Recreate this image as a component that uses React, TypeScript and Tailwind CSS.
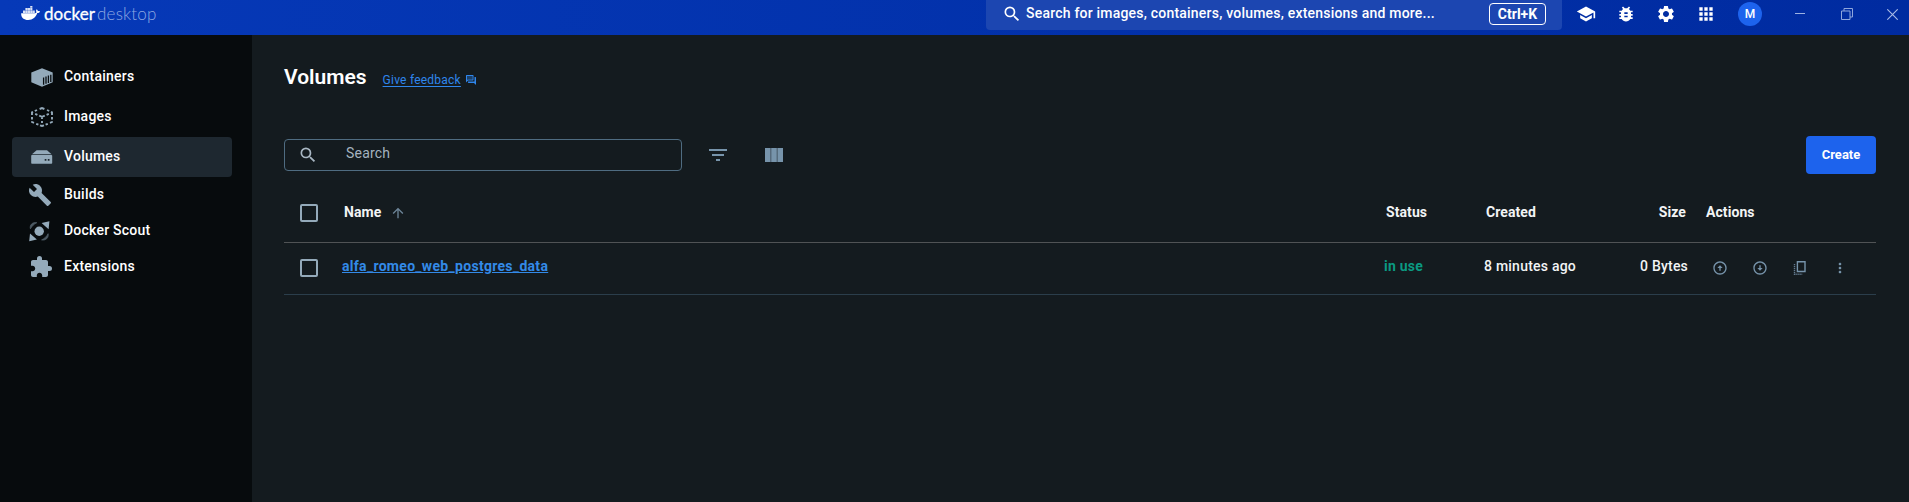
import type { ReactNode } from "react";
import {
  MdSchool,
  MdBugReport,
  MdSettings,
  MdApps,
  MdSearch,
  MdBuild,
  MdExtension,
  MdFilterList,
  MdArrowUpward,
  MdMoreVert,
  MdOutlineArrowCircleUp,
  MdOutlineArrowCircleDown,
} from "react-icons/md";

function Whale() {
  return (
    <svg className="h-[15px] w-[19px]" viewBox="0 0 19 15" fill="#fff">
      <path d="M0.2 7.2H14.2C14.9 7.1 15.3 6.8 15.5 6.3C14.9 5.2 15 4.2 15.6 3.3C16.4 3.8 16.8 4.4 16.9 5.2C17.7 5 18.4 5.1 19 5.5C18.6 6.6 17.6 7.1 16.3 7.1C14.9 11.3 11.9 14 7.2 14C2.6 14 -0.2 11.6 0.2 7.2Z" />
      <path d="M2 4.5h2.2v2.4H2zM4.4 4.5h2.2v2.4h-2.2zM6.8 4.5h2.2v2.4h-2.2zM9.2 4.5h2.2v2.4h-2.2zM11.6 4.5h2.2v2.4h-2.2zM4.4 2h2.2v2.3h-2.2zM6.8 2h2.2v2.3h-2.2zM9.2 2h2.2v2.3h-2.2zM9.2 0h2.2v1.8h-2.2z" opacity="0.85" />
    </svg>
  );
}

function ContainerIcon() {
  return (
    <svg className="h-[19px] w-[22px]" viewBox="0 0 22 19">
      <path d="M11 0.3L21.7 4.6V14.2L11 18.7L0.3 14.2V4.6Z" fill="#94aaba" />
      <path d="M12.6 9.4V16.8M15 8.5V15.8M17.4 7.6V14.9M19.8 6.7V13.9" stroke="#0a0f12" strokeWidth="1.3" fill="none" />
    </svg>
  );
}

function ImageIcon() {
  return (
    <svg className="h-[20px] w-[22px]" viewBox="0 0 22 20" fill="none" stroke="#94aaba" strokeWidth="1.9">
      <path d="M8.6 2L11 1L13.4 2M16 3L18.2 4M3.8 4L6 3M1 8V5.4L2 4.8M20 4.8L21 5.4V8M1 10V12.6M21 10V12.6M1 14.3V15L3 15.9M21 14.3V15L19 15.9M5.2 16.8L7.4 17.7M16.8 16.8L14.6 17.7M9 18.3L11 19L13 18.3M4.2 6.8L6.4 7.8M17.8 6.8L15.6 7.8M8.2 8.6L11 9.8L13.8 8.6M11 9.8V12M11 14V16" />
    </svg>
  );
}

function VolumeIcon() {
  return (
    <svg className="h-[14px] w-[22px]" viewBox="0 0 22 14">
      <path d="M5.6 0.2H16L20.6 4.3H1Z" fill="#94aaba" />
      <rect x="0.2" y="5" width="21" height="8.8" rx="0.8" fill="#94aaba" />
      <path d="M13.7 9h1.7v1.7h-1.7zM16.8 9h1.7v1.7h-1.7z" fill="#1e2830" />
    </svg>
  );
}

function ScoutIcon() {
  return (
    <svg className="h-[21px] w-[21px]" viewBox="0 0 21 21">
      <circle cx="10.2" cy="10.2" r="4.7" fill="#94aaba" />
      <path d="M20.4 0.2L19.6 8.2L12.6 1.9ZM0.2 20.2L1 12.4L7.9 18.4Z" fill="#94aaba" />
      <path d="M1.4 7.8C0.4 4 3.6 0.8 7.8 1.7C5 3 3 5 1.4 7.8ZM12.6 18.9C16.9 19.7 19.9 16.8 19.1 12.7C17.6 15.6 15.5 17.6 12.6 18.9Z" fill="#4d5a64" stroke="#4d5a64" strokeWidth="0.8" />
    </svg>
  );
}

function ColumnsIcon() {
  return (
    <svg className="size-6" viewBox="0 0 24 24" fill="#7794ab">
      <path opacity="0.5" d="M8 5h8v14H8z" />
      <path d="M14.67 5v14H9.33V5h5.34zm1 14H21V5h-5.33v14zm-7.34 0V5H3v14h5.33z" />
    </svg>
  );
}

function FeedbackIcon() {
  return (
    <svg className="ml-[4px] size-[12px]" viewBox="0 0 24 24" fill="currentColor">
      <path opacity="0.35" d="M15 11V4H4v8.2L5.2 11H15z" />
      <path d="M16 13c.55 0 1-.45 1-1V3c0-.55-.45-1-1-1H3c-.55 0-1 .45-1 1v14l4-4h10zm-12-.83V4h11v7H5.17L4 12.17zM22 7c0-.55-.45-1-1-1h-2v9H6v2c0 .55.45 1 1 1h11l4 4V7z" />
    </svg>
  );
}

function CloneIcon() {
  return (
    <svg className="size-4" viewBox="0 0 16 16" fill="none" stroke="currentColor">
      <path d="M5.4 1.7h7.6v9.8H5.4z" strokeWidth="1.4" />
      <path d="M2.5 4v10.2h8" strokeWidth="1.4" strokeDasharray="1.2 0.8" opacity="0.8" />
    </svg>
  );
}

function NavItem({ icon, label, className }: { icon: ReactNode; label: string; className: string }) {
  return (
    <a className={`flex items-center rounded-[4px] pl-[17px] text-[14px] font-medium text-white ${className}`}>
      <span className="flex w-[35px] shrink-0 items-center">{icon}</span>
      <span className="relative -top-px tracking-[0.23px]">{label}</span>
    </a>
  );
}

function Checkbox() {
  return <span className="block size-[18px] rounded-[2px] border-2 border-[#94aaba]" />;
}

function TopBar() {
  return (
    <header className="flex h-[35px] shrink-0 bg-linear-to-r from-[#0639b8] to-[#002ba0] pl-[21px] text-white">
      <div className="flex h-[27px] items-center">
        <Whale />
        <span className="ml-[4px] w-[53px] text-[17px] leading-none tracking-[0.05px] font-[Lato] [-webkit-text-stroke:0.3px_white]">docker</span>
        <span className="text-[17px] leading-none font-light tracking-[0.2px] text-[#8fa8e2] font-[Lato]">desktop</span>
      </div>
      <div className="ml-auto flex h-[30px] w-[576px] items-start rounded-b-[4px] bg-[#1c46b1] pl-[16px]">
        <MdSearch className="mt-[4px] size-5" />
        <span className="mt-[3px] ml-[4px] text-[14px] leading-[20px] font-medium tracking-[0.21px] whitespace-nowrap">
          Search for images, containers, volumes, extensions and more...
        </span>
        <span className="mt-[3px] mr-[16px] ml-auto flex h-[22px] w-[57px] items-center justify-center rounded-[4px] border border-white text-[14px] leading-none font-bold">
          Ctrl+K
        </span>
      </div>
      <div className="flex h-[28px] w-[347px] items-center pl-[14px]">
        <MdSchool className="size-5" />
        <MdBugReport className="ml-[20px] size-5" />
        <MdSettings className="ml-[20px] size-5" />
        <MdApps className="ml-[20px] size-5" />
        <span className="ml-[22px] flex size-6 items-center justify-center rounded-full bg-[#1d63ed] text-[12px] font-medium">M</span>
        <svg className="ml-[33px] size-[10px]" viewBox="0 0 10 10" stroke="#9db2e2"><path d="M0 4.5h10" /></svg>
        <svg className="ml-[36px] size-[12px]" viewBox="0 0 12 12" fill="none" stroke="#8fa6dc"><path d="M0.5 3h8.5v8.5h-8.5zM3 3V0.5h8.5V9H9" /></svg>
        <svg className="ml-[34px] size-[11px]" viewBox="0 0 11 11" stroke="#a9bbe6" strokeWidth="1.1"><path d="M0.3 0.3L10.7 10.7M10.7 0.3L0.3 10.7" /></svg>
      </div>
    </header>
  );
}

export default function App() {
  return (
    <div className="flex h-[502px] w-[1909px] flex-col overflow-hidden bg-[#141b1f] font-[Roboto,sans-serif] text-white">
      <TopBar />
      <div className="flex flex-1">
        <nav className="flex w-[252px] flex-col bg-[#070b0d] px-[12px] pt-[22px]">
          <NavItem className="h-10 w-[220px] pl-[19px]! [&>span:first-child]:w-[33px]" icon={<ContainerIcon />} label="Containers" />
          <NavItem className="h-10 w-[220px] pl-[19px]! [&>span:first-child]:w-[33px]" icon={<ImageIcon />} label="Images" />
          <NavItem className="h-10 w-[220px] bg-[#1e2830] pl-[19px]! [&>span:first-child]:w-[33px]" icon={<VolumeIcon />} label="Volumes" />
          <NavItem className="h-9" icon={<MdBuild className="size-6 -ml-px text-[#94aaba]" />} label="Builds" />
          <NavItem className="h-9" icon={<ScoutIcon />} label="Docker Scout" />
          <NavItem className="h-9" icon={<MdExtension className="size-6 text-[#94aaba]" />} label="Extensions" />
        </nav>
        <main className="flex flex-1 flex-col pr-[33px] pl-[32px]">
          <div className="flex h-[100px] pt-[25px]">
            <h1 className="text-[21px] leading-[34px] font-semibold">Volumes</h1>
            <a className="ml-[16px] flex h-[40px] items-center text-[#2f86ec]">
              <span className="text-[12px] leading-none tracking-[0.23px] underline underline-offset-2">Give feedback</span>
              <FeedbackIcon />
            </a>
          </div>
          <div className="flex h-[39px] items-center">
            <div className="flex h-[32px] w-[398px] items-center rounded-[4px] border border-[#4f6c81] pl-[13px]">
              <MdSearch className="size-5 text-[#a9b7c3]" />
              <span className="relative -top-px ml-[28px] text-[14px] tracking-[0.2px] text-[#a5b3bf]">Search</span>
            </div>
            <MdFilterList className="ml-[24px] size-6 text-[#7794ab]" />
            <span className="ml-[32px]"><ColumnsIcon /></span>
            <button className="ml-auto h-[38px] w-[70px] rounded-[4px] bg-[#1d63ed] text-[13px] font-bold">Create</button>
          </div>
          <div className="mt-[10px] flex h-[59px] items-center border-b border-[#505355] pb-[1px] pl-[16px] text-[14px] font-bold tracking-[0.08px] text-[#f2f4f5]">
            <Checkbox />
            <span className="ml-[26px]">Name</span>
            <MdArrowUpward className="ml-[9px] size-4 text-[#6d8598]" />
            <span className="ml-auto w-[100px]">Status</span>
            <span className="w-[120px]">Created</span>
            <span className="w-[80px] text-right">Size</span>
            <span className="ml-[20px] w-[170px]">Actions</span>
          </div>
          <div className="flex h-[52px] items-center border-b border-[#2b3e4b] pb-[2px] pl-[16px] text-[14px] font-medium text-[#f2f4f5]">
            <Checkbox />
            <a className="relative -top-px ml-[24px] font-bold tracking-[0.3px] text-[#338ae8] underline">alfa_romeo_web_postgres_data</a>
            <span className="relative -top-px ml-auto w-[100px] font-bold tracking-[0.25px] text-[#0b9a82]">in use</span>
            <span className="relative -top-px w-[120px] tracking-[0.23px]">8 minutes ago</span>
            <span className="relative -top-px w-[84px] text-right tracking-[0.2px]">0 Bytes</span>
            <span className="ml-[24px] flex w-[164px] items-center gap-[24px] text-[#7794ab]">
              <MdOutlineArrowCircleUp className="size-4" />
              <MdOutlineArrowCircleDown className="size-4" />
              <CloneIcon />
              <MdMoreVert className="size-4" />
            </span>
          </div>
        </main>
      </div>
    </div>
  );
}
